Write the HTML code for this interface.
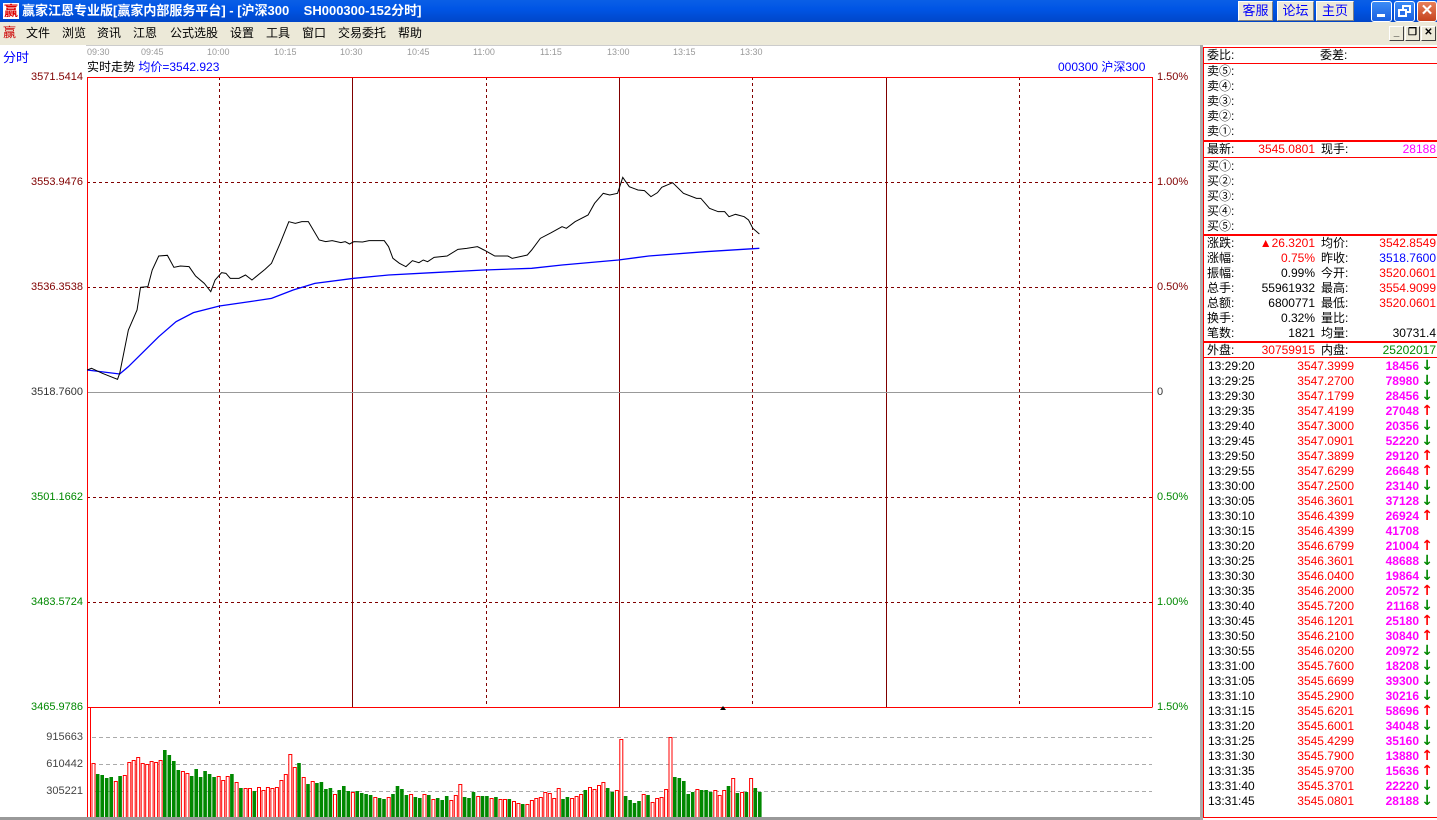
<!DOCTYPE html>
<html><head><meta charset="utf-8">
<style>
*{margin:0;padding:0;box-sizing:border-box}
body{width:1437px;height:820px;overflow:hidden;background:#fff;position:relative;font-family:"Liberation Sans","Noto Sans CJK SC",sans-serif;font-size:12px;color:#000}
.a{position:absolute;white-space:nowrap;line-height:14px}
#title{position:absolute;left:0;top:0;width:1437px;height:22px;background:linear-gradient(#0a5fe6,#0055e5 40%,#0046c8);}
#menu{position:absolute;left:0;top:22px;width:1437px;height:23px;background:#ece9d8}
.btn{position:absolute;top:1px;height:20px;background:#ece9d8;border:1px solid #fff;border-right-color:#808080;border-bottom-color:#808080;color:#0000ff;font-size:13px;text-align:center;line-height:18px}
.wb{position:absolute;top:1px;width:21px;height:21px;border:1px solid #fff;border-radius:3px;background:linear-gradient(#3c8cf6,#1a5fe0)}
.mb{position:absolute;top:26px;width:15px;height:15px;background:#ece9d8;border:1px solid #fff;border-right-color:#404040;border-bottom-color:#404040;font-size:10px;text-align:center;line-height:12px;font-weight:bold}
.tl{position:absolute;top:47px;font-size:9px;color:#999;line-height:10px}
.lv{position:absolute;right:1354px;font-size:11px;line-height:12px}
.rv{position:absolute;left:1157px;font-size:11px;line-height:12px}
.rp{position:absolute;left:1207px;line-height:15px;font-size:12px}
.r{position:absolute;text-align:right;line-height:15px}
.tk{position:absolute;left:1208px;width:225px;height:15px;line-height:15px}
.tk span{position:absolute}
.tk .p{right:79px;color:#f00}
.tk .v{right:14px;color:#f0f;font-weight:bold}
.tk .d,.tk .u{right:0px;font-weight:bold;font-family:"DejaVu Sans",sans-serif;font-size:14px;line-height:15px}
.tk .d{color:#080}
.tk .u{color:#f00}
</style></head><body>
<div id="title">
 <div class="a" style="left:3px;top:3px;width:16px;height:16px;background:#fff;color:#d00;font-size:14px;line-height:16px;font-weight:bold;text-align:center">赢</div>
 <div class="a" style="left:22px;top:3px;color:#fff;font-size:13px;font-weight:bold;line-height:16px">赢家江恩专业版[赢家内部服务平台] - [沪深300&nbsp;&nbsp;&nbsp;&nbsp;SH000300-152分时]</div>
 <div class="btn" style="left:1238px;width:35px">客服</div>
 <div class="btn" style="left:1277px;width:37px">论坛</div>
 <div class="btn" style="left:1316px;width:38px">主页</div>
 <div class="wb" style="left:1371px"><div style="position:absolute;left:5px;top:12px;width:8px;height:3px;background:#fff"></div></div>
 <div class="wb" style="left:1394px"><div style="position:absolute;left:7px;top:3px;width:9px;height:8px;border:2px solid #fff"></div><div style="position:absolute;left:3px;top:7px;width:9px;height:8px;border:2px solid #fff;background:#2a70ea"></div></div>
 <div class="wb" style="left:1417px;width:20px;background:linear-gradient(#e8805a,#c5431e);color:#fff;font-weight:bold;font-size:15px;text-align:center;line-height:18px">✕</div>
</div>
<div id="menu">
 <div class="a" style="left:3px;top:4px;color:#c00;font-size:13px">赢</div>
 <div class="a" style="left:26px;top:4px">文件</div>
 <div class="a" style="left:62px;top:4px">浏览</div>
 <div class="a" style="left:97px;top:4px">资讯</div>
 <div class="a" style="left:133px;top:4px">江恩</div>
 <div class="a" style="left:170px;top:4px">公式选股</div>
 <div class="a" style="left:230px;top:4px">设置</div>
 <div class="a" style="left:266px;top:4px">工具</div>
 <div class="a" style="left:302px;top:4px">窗口</div>
 <div class="a" style="left:338px;top:4px">交易委托</div>
 <div class="a" style="left:398px;top:4px">帮助</div>
 <div class="mb" style="left:1389px;top:4px">_</div>
 <div class="mb" style="left:1405px;top:4px">❐</div>
 <div class="mb" style="left:1421px;top:4px">✕</div>
</div>
<div class="a" style="left:3px;top:51px;color:#00f;font-size:13px">分时</div>
<div style="position:absolute;left:86px;top:45px;width:1114px;height:1px;background:#ccc"></div>
<div class="tl" style="left:87px">09:30</div><div class="tl" style="left:141px">09:45</div><div class="tl" style="left:207px">10:00</div><div class="tl" style="left:274px">10:15</div><div class="tl" style="left:340px">10:30</div><div class="tl" style="left:407px">10:45</div><div class="tl" style="left:473px">11:00</div><div class="tl" style="left:540px">11:15</div><div class="tl" style="left:607px">13:00</div><div class="tl" style="left:673px">13:15</div><div class="tl" style="left:740px">13:30</div>
<div class="a" style="left:87px;top:60px">实时走势 <span style="color:#00f">均价=3542.923</span></div>
<div class="a" style="left:1058px;top:60px;color:#00f">000300 沪深300</div>

<svg style="position:absolute;left:0;top:0" width="1200" height="820">
 <g stroke="#800000" stroke-dasharray="3,3" stroke-width="1">
  <line x1="87" y1="182.5" x2="1152" y2="182.5"/><line x1="87" y1="287.5" x2="1152" y2="287.5"/>
  <line x1="87" y1="497.5" x2="1152" y2="497.5"/><line x1="87" y1="602.5" x2="1152" y2="602.5"/>
  <line x1="219.5" y1="77" x2="219.5" y2="707"/><line x1="486.5" y1="77" x2="486.5" y2="707"/>
  <line x1="752.5" y1="77" x2="752.5" y2="707"/><line x1="1019.5" y1="77" x2="1019.5" y2="707"/>
 </g>
 <g stroke="#800000"><line x1="352.5" y1="77" x2="352.5" y2="707"/><line x1="619.5" y1="77" x2="619.5" y2="707"/><line x1="886.5" y1="77" x2="886.5" y2="707"/></g>
 <line x1="87" y1="392.5" x2="1152" y2="392.5" stroke="#999"/>
 <g stroke="#aaa" stroke-dasharray="4,3"><line x1="92" y1="737.5" x2="1152" y2="737.5"/><line x1="92" y1="764.5" x2="1152" y2="764.5"/><line x1="92" y1="791.5" x2="1152" y2="791.5"/></g>
 <g stroke="#f00" fill="none"><polyline points="87.5,820 87.5,77.5 1152.5,77.5 1152.5,707.5"/><line x1="87" y1="707.5" x2="1152" y2="707.5"/></g>
 <path d="M720 710 L723 706 L726 710Z" fill="#000"/>
 <g id="bars"></g>
 <rect x="0" y="817" width="1200" height="3" fill="#999"/>
</svg>
<svg style="position:absolute;left:85px;top:170px" width="680" height="220" viewBox="0 0 1568 660" preserveAspectRatio="none">
<polyline fill="none" stroke="#00f" stroke-width="2.5" vector-effect="non-scaling-stroke" points="5,600 80,612 100,590 170,500 210,455 250,428 310,408 380,395 430,385 480,360 530,340 620,325 700,315 800,308 920,300 1030,295 1100,285 1230,270 1300,258 1430,245 1555,235" style="stroke-width:1.3"/>
<polyline fill="none" stroke="#000" vector-effect="non-scaling-stroke" style="stroke-width:1" points="5,600 15,595 40,610 75,628 80,610 100,480 120,420 128,352 145,350 155,300 170,258 190,256 205,292 220,288 240,290 255,318 275,340 290,365 300,330 315,308 325,310 335,325 355,325 370,315 385,330 415,298 430,280 450,220 470,155 485,160 500,155 515,155 540,210 555,215 570,212 590,218 600,215 610,222 620,215 640,216 655,212 670,212 690,212 700,230 710,265 725,280 740,290 755,272 770,278 780,270 790,275 805,262 835,258 860,238 880,235 905,230 920,240 945,258 975,258 985,265 1010,258 1020,255 1030,240 1050,205 1075,188 1100,170 1110,175 1130,155 1160,135 1175,100 1195,70 1210,75 1228,70 1240,22 1255,50 1275,60 1290,62 1305,80 1320,68 1330,52 1355,38 1380,70 1410,85 1420,85 1440,115 1460,125 1475,125 1485,140 1500,133 1520,140 1530,150 1540,175 1555,192"/>
</svg>

<div class="lv" style="top:71px;color:#800000">3571.5414</div>
<div class="lv" style="top:176px;color:#800000">3553.9476</div>
<div class="lv" style="top:281px;color:#800000">3536.3538</div>
<div class="lv" style="top:386px;color:#333">3518.7600</div>
<div class="lv" style="top:491px;color:#080">3501.1662</div>
<div class="lv" style="top:596px;color:#080">3483.5724</div>
<div class="lv" style="top:701px;color:#080">3465.9786</div>
<div class="lv" style="top:731px;color:#444">915663</div>
<div class="lv" style="top:758px;color:#444">610442</div>
<div class="lv" style="top:785px;color:#444">305221</div>
<div class="rv" style="top:71px;color:#800000">1.50%</div>
<div class="rv" style="top:176px;color:#800000">1.00%</div>
<div class="rv" style="top:281px;color:#800000">0.50%</div>
<div class="rv" style="top:386px;color:#333">0</div>
<div class="rv" style="top:491px;color:#080">0.50%</div>
<div class="rv" style="top:596px;color:#080">1.00%</div>
<div class="rv" style="top:701px;color:#080">1.50%</div>

<div style="position:absolute;left:1200px;top:45px;width:3px;height:775px;background:#aaa"></div>
<div style="position:absolute;left:1203px;top:47px;width:234px;height:771px;border:1px solid #f00;border-right:none"></div>
<div style="position:absolute;left:1203px;top:63px;width:234px;height:1px;background:#f00"></div>
<div style="position:absolute;left:1203px;top:140px;width:234px;height:2px;background:#f00"></div>
<div style="position:absolute;left:1203px;top:157px;width:234px;height:1px;background:#f00"></div>
<div style="position:absolute;left:1203px;top:234px;width:234px;height:2px;background:#f00"></div>
<div style="position:absolute;left:1203px;top:341px;width:234px;height:2px;background:#f00"></div>
<div style="position:absolute;left:1203px;top:357px;width:234px;height:1px;background:#f00"></div>
<div class="rp" style="top:48px">委比:</div><div class="rp" style="top:48px;left:1320px">委差:</div>
<div class="rp" style="top:64px">卖⑤:</div><div class="rp" style="top:79px">卖④:</div><div class="rp" style="top:94px">卖③:</div><div class="rp" style="top:109px">卖②:</div><div class="rp" style="top:124px">卖①:</div>
<div class="rp" style="top:142px">最新:</div><div class="r" style="top:142px;right:122px;color:#f00">3545.0801</div><div class="rp" style="top:142px;left:1321px">现手:</div><div class="r" style="top:142px;right:1px;color:#f0f">28188</div>
<div class="rp" style="top:159px">买①:</div><div class="rp" style="top:174px">买②:</div><div class="rp" style="top:189px">买③:</div><div class="rp" style="top:204px">买④:</div><div class="rp" style="top:219px">买⑤:</div>
<div class="rp" style="top:236px">涨跌:</div><div class="r" style="top:236px;right:122px;color:#f00">▲26.3201</div><div class="rp" style="top:236px;left:1321px">均价:</div><div class="r" style="top:236px;right:1px;color:#f00">3542.8549</div>
<div class="rp" style="top:251px">涨幅:</div><div class="r" style="top:251px;right:122px;color:#f00">0.75%</div><div class="rp" style="top:251px;left:1321px">昨收:</div><div class="r" style="top:251px;right:1px;color:#00f">3518.7600</div>
<div class="rp" style="top:266px">振幅:</div><div class="r" style="top:266px;right:122px">0.99%</div><div class="rp" style="top:266px;left:1321px">今开:</div><div class="r" style="top:266px;right:1px;color:#f00">3520.0601</div>
<div class="rp" style="top:281px">总手:</div><div class="r" style="top:281px;right:122px">55961932</div><div class="rp" style="top:281px;left:1321px">最高:</div><div class="r" style="top:281px;right:1px;color:#f00">3554.9099</div>
<div class="rp" style="top:296px">总额:</div><div class="r" style="top:296px;right:122px">6800771</div><div class="rp" style="top:296px;left:1321px">最低:</div><div class="r" style="top:296px;right:1px;color:#f00">3520.0601</div>
<div class="rp" style="top:311px">换手:</div><div class="r" style="top:311px;right:122px">0.32%</div><div class="rp" style="top:311px;left:1321px">量比:</div>
<div class="rp" style="top:326px">笔数:</div><div class="r" style="top:326px;right:122px">1821</div><div class="rp" style="top:326px;left:1321px">均量:</div><div class="r" style="top:326px;right:1px">30731.4</div>
<div class="rp" style="top:343px">外盘:</div><div class="r" style="top:343px;right:122px;color:#f00">30759915</div><div class="rp" style="top:343px;left:1321px">内盘:</div><div class="r" style="top:343px;right:1px;color:#080">25202017</div>

<div class="tk" style="top:359px">13:29:20<span class="p">3547.3999</span><span class="v">18456</span><span class="d">↓</span></div>
<div class="tk" style="top:374px">13:29:25<span class="p">3547.2700</span><span class="v">78980</span><span class="d">↓</span></div>
<div class="tk" style="top:389px">13:29:30<span class="p">3547.1799</span><span class="v">28456</span><span class="d">↓</span></div>
<div class="tk" style="top:404px">13:29:35<span class="p">3547.4199</span><span class="v">27048</span><span class="u">↑</span></div>
<div class="tk" style="top:419px">13:29:40<span class="p">3547.3000</span><span class="v">20356</span><span class="d">↓</span></div>
<div class="tk" style="top:434px">13:29:45<span class="p">3547.0901</span><span class="v">52220</span><span class="d">↓</span></div>
<div class="tk" style="top:449px">13:29:50<span class="p">3547.3899</span><span class="v">29120</span><span class="u">↑</span></div>
<div class="tk" style="top:464px">13:29:55<span class="p">3547.6299</span><span class="v">26648</span><span class="u">↑</span></div>
<div class="tk" style="top:479px">13:30:00<span class="p">3547.2500</span><span class="v">23140</span><span class="d">↓</span></div>
<div class="tk" style="top:494px">13:30:05<span class="p">3546.3601</span><span class="v">37128</span><span class="d">↓</span></div>
<div class="tk" style="top:509px">13:30:10<span class="p">3546.4399</span><span class="v">26924</span><span class="u">↑</span></div>
<div class="tk" style="top:524px">13:30:15<span class="p">3546.4399</span><span class="v">41708</span></div>
<div class="tk" style="top:539px">13:30:20<span class="p">3546.6799</span><span class="v">21004</span><span class="u">↑</span></div>
<div class="tk" style="top:554px">13:30:25<span class="p">3546.3601</span><span class="v">48688</span><span class="d">↓</span></div>
<div class="tk" style="top:569px">13:30:30<span class="p">3546.0400</span><span class="v">19864</span><span class="d">↓</span></div>
<div class="tk" style="top:584px">13:30:35<span class="p">3546.2000</span><span class="v">20572</span><span class="u">↑</span></div>
<div class="tk" style="top:599px">13:30:40<span class="p">3545.7200</span><span class="v">21168</span><span class="d">↓</span></div>
<div class="tk" style="top:614px">13:30:45<span class="p">3546.1201</span><span class="v">25180</span><span class="u">↑</span></div>
<div class="tk" style="top:629px">13:30:50<span class="p">3546.2100</span><span class="v">30840</span><span class="u">↑</span></div>
<div class="tk" style="top:644px">13:30:55<span class="p">3546.0200</span><span class="v">20972</span><span class="d">↓</span></div>
<div class="tk" style="top:659px">13:31:00<span class="p">3545.7600</span><span class="v">18208</span><span class="d">↓</span></div>
<div class="tk" style="top:674px">13:31:05<span class="p">3545.6699</span><span class="v">39300</span><span class="d">↓</span></div>
<div class="tk" style="top:689px">13:31:10<span class="p">3545.2900</span><span class="v">30216</span><span class="d">↓</span></div>
<div class="tk" style="top:704px">13:31:15<span class="p">3545.6201</span><span class="v">58696</span><span class="u">↑</span></div>
<div class="tk" style="top:719px">13:31:20<span class="p">3545.6001</span><span class="v">34048</span><span class="d">↓</span></div>
<div class="tk" style="top:734px">13:31:25<span class="p">3545.4299</span><span class="v">35160</span><span class="d">↓</span></div>
<div class="tk" style="top:749px">13:31:30<span class="p">3545.7900</span><span class="v">13880</span><span class="u">↑</span></div>
<div class="tk" style="top:764px">13:31:35<span class="p">3545.9700</span><span class="v">15636</span><span class="u">↑</span></div>
<div class="tk" style="top:779px">13:31:40<span class="p">3545.3701</span><span class="v">22220</span><span class="d">↓</span></div>
<div class="tk" style="top:794px">13:31:45<span class="p">3545.0801</span><span class="v">28188</span><span class="d">↓</span></div>

<script>
var d="110r 54r 43g 42g 39g 40g 36r 41g 42r 55r 57r 60r 54r 53r 56r 55r 57r 67g 62g 56g 47g 46r 44r 41g 48g 40g 46g 43g 40g 41r 37r 41r 43g 35r 29g 29r 29r 26g 30r 27r 30r 29r 30r 37r 43r 63r 50r 54g 40r 33g 36r 34g 35g 28g 29g 23r 27g 31g 26g 25r 26g 24g 23g 22g 20r 19g 18g 20r 23g 31g 28g "+
"22g 23r 20g 19g 23r 22g 18r 19g 17g 21g 17r 22r 33r 20g 19g 25g 21r 21g 21g 19r 20g 18r 18r 18g 16r 14r 13g 13r 17r 19r 20r 25r 24r 19r 29r 18g 20g 19r 21r 23r 27g 30r 28r 32r 35r 29g 25g 27r 78r 21g 17g 14g 16g 23r 22g 15r 19r 20r 28r 80r 40g 39g 36g 23g 25g 28r 27g 27g 25g 27r 22r 27r 31g 39r 24g 25r 25g 39r 29g 25g";
var a=d.trim().split(/\s+/),s="",st=(758-87)/(a.length-1);
for(var i=0;i<a.length;i++){var h=parseInt(a[i]),c=a[i].slice(-1),x=87+i*st;
if(c=="r")s+='<rect x="'+(x+0.5).toFixed(1)+'" y="'+(817.5-h)+'" width="3" height="'+h+'" fill="#fff" stroke="#f00"/>';
else s+='<rect x="'+x.toFixed(1)+'" y="'+(817-h)+'" width="3.6" height="'+h+'" fill="#080"/>';}
document.getElementById("bars").innerHTML=s;
</script>
</body></html>
